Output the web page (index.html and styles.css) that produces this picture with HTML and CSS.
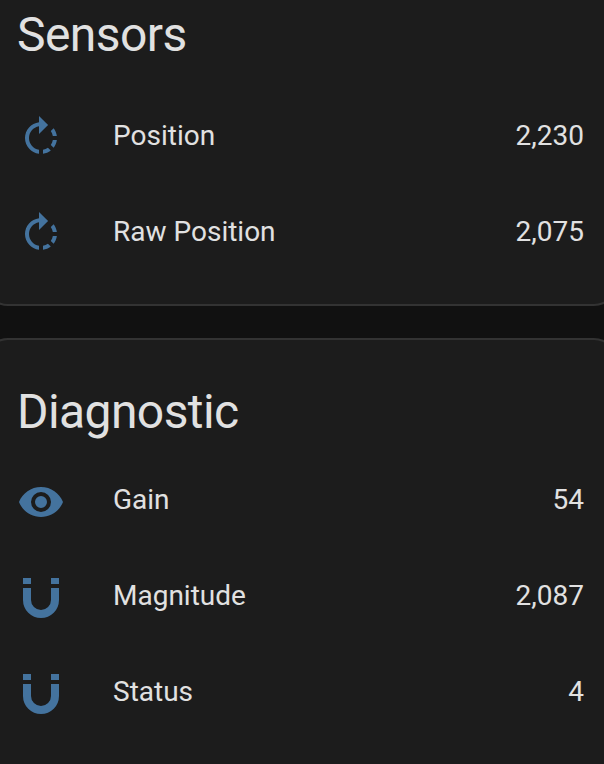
FILE: index.html
```
<!DOCTYPE html>
<html lang="en">
<head>
    <meta charset="UTF-8">
    <meta name="viewport" content="width=device-width, initial-scale=1.0">
    <title>Sensors</title>
    <link rel="stylesheet" href="styles.css">
</head>
<body>
    <svg class="symbols">
        <symbol id="rotate" viewBox="0 0 24 24">
            <path d="M16.89,15.5L18.31,16.89C19.21,15.73 19.76,14.39 19.93,13H17.91C17.77,13.87 17.43,14.72 16.89,15.5M13,17.9V19.92C14.39,19.75 15.74,19.21 16.9,18.31L15.46,16.87C14.71,17.41 13.87,17.76 13,17.9M19.93,11C19.76,9.61 19.21,8.27 18.31,7.11L16.89,8.53C17.43,9.28 17.77,10.13 17.91,11M15.55,5.55L11,1V4.07C7.06,4.56 4,7.92 4,12C4,16.08 7.05,19.44 11,19.93V17.91C8.16,17.43 6,14.97 6,12C6,9.03 8.16,6.57 11,6.09V10L15.55,5.55Z"/>
        </symbol>
        <symbol id="eye" viewBox="0 0 24 24">
            <path d="M12,9A3,3 0 0,0 9,12A3,3 0 0,0 12,15A3,3 0 0,0 15,12A3,3 0 0,0 12,9M12,17A5,5 0 0,1 7,12A5,5 0 0,1 12,7A5,5 0 0,1 17,12A5,5 0 0,1 12,17M12,4.5C7,4.5 2.73,7.61 1,12C2.73,16.39 7,19.5 12,19.5C17,19.5 21.27,16.39 23,12C21.27,7.61 17,4.5 12,4.5Z"/>
        </symbol>
        <symbol id="magnet" viewBox="0 0 24 24">
            <path d="M3,7V13A9,9 0 0,0 12,22A9,9 0 0,0 21,13V7H17V13A5,5 0 0,1 12,18A5,5 0 0,1 7,13V7M17,5H21V2H17M3,5H7V2H3"/>
        </symbol>
    </svg>

    <div class="card sensors">
        <h1>Sensors</h1>
        <div class="row">
            <svg class="icon"><use href="#rotate"/></svg>
            <span class="name">Position</span>
            <span class="value">2,230</span>
        </div>
        <div class="row">
            <svg class="icon"><use href="#rotate"/></svg>
            <span class="name">Raw Position</span>
            <span class="value">2,075</span>
        </div>
    </div>

    <div class="card diagnostic">
        <h1>Diagnostic</h1>
        <div class="row">
            <svg class="icon"><use href="#eye"/></svg>
            <span class="name">Gain</span>
            <span class="value">54</span>
        </div>
        <div class="row">
            <svg class="icon"><use href="#magnet"/></svg>
            <span class="name">Magnitude</span>
            <span class="value">2,087</span>
        </div>
        <div class="row">
            <svg class="icon"><use href="#magnet"/></svg>
            <span class="name">Status</span>
            <span class="value">4</span>
        </div>
    </div>
</body>
</html>
```
FILE: styles.css
```
* {
    box-sizing: border-box;
}

body {
    margin: 0;
    height: 764px;
    overflow: hidden;
    display: flex;
    flex-direction: column;
    gap: 32px;
    font-family: Roboto, sans-serif;
    color: #e1e1e1;
    background-color: #111111;
}

.symbols {
    display: none;
}

.card {
    margin: 0 -14px 0 -16px;
    padding: 0 32px 0 31px;
    border: 2px solid #333333;
    border-radius: 24px;
    background-color: #1c1c1c;
}

.sensors {
    height: 306px;
    border-top: none;
    border-top-left-radius: 0;
    border-top-right-radius: 0;
}

.diagnostic {
    height: 426px;
    border-bottom: none;
    border-bottom-left-radius: 0;
    border-bottom-right-radius: 0;
}

h1 {
    margin: 0;
    font-size: 48px;
    font-weight: 400;
    line-height: 72px;
    letter-spacing: -0.576px;
}

.sensors h1 {
    height: 88px;
    line-height: 70px;
}

.diagnostic h1 {
    padding-top: 36px;
    height: 112px;
}

.row {
    display: flex;
    align-items: center;
    height: 96px;
    font-size: 28px;
}

.icon {
    width: 48px;
    height: 48px;
    margin-top: 4px;
    fill: #44739e;
}

.name {
    flex: 1;
    margin-left: 48px;
    padding-bottom: 2px;
}

.value {
    padding-bottom: 2px;
}
```
